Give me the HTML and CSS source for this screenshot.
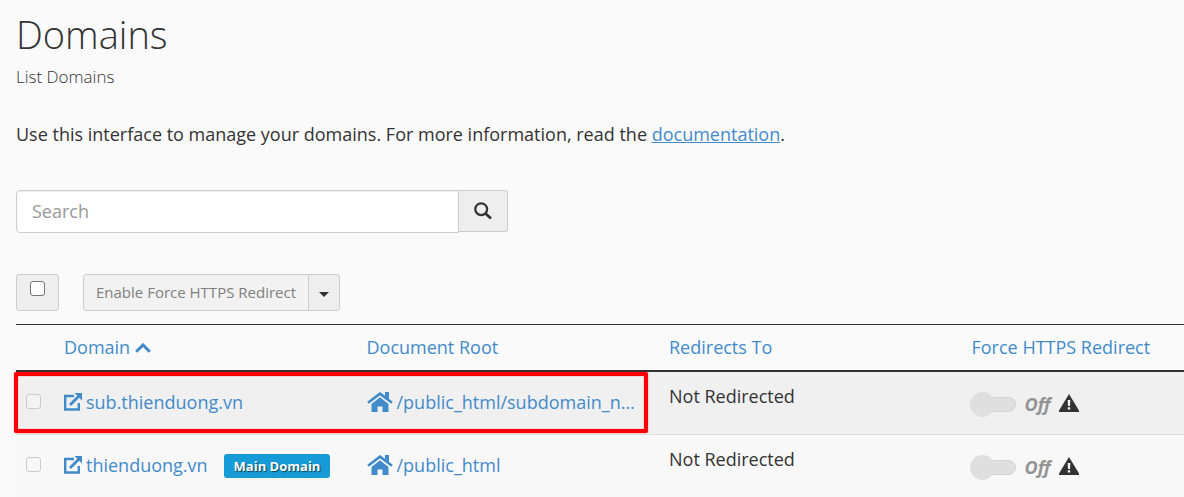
FILE: index.html
```html
<!DOCTYPE html>
<html lang="en">
<head>
<meta charset="utf-8">
<title>Domains</title>
<link rel="stylesheet" href="styles.css">
</head>
<body>
<svg class="sprite" aria-hidden="true">
  <symbol id="external" viewBox="0 0 18 18">
    <path d="M10 3H1.200V16.500H14.800V10" fill="none" stroke="currentColor" stroke-width="2.400"/>
    <path d="M6 12L15 3" stroke="currentColor" stroke-width="2.800"/>
    <path d="M10.500 0H18V7.500Z" fill="currentColor"/>
  </symbol>
  <symbol id="home" viewBox="0 0 26 20">
    <path d="M1 10.800L13 1.600L25 10.800" fill="none" stroke="currentColor" stroke-width="2.600"/>
    <path d="M18 0H22V8L18 5Z" fill="currentColor"/>
    <path d="M13 5.200L21.500 12V20H15.500V14.500H10.500V20H4.500V12Z" fill="currentColor"/>
  </symbol>
  <symbol id="warning" viewBox="0 0 20 18">
    <path d="M10 0L20 16.500V18H0V16.500Z" fill="currentColor"/>
    <path d="M8.700 6H11.300L11 12H9ZM8.800 13.200H11.200V15.500H8.800Z" fill="#f5f5f5"/>
  </symbol>
</svg>
<main class="page">
  <h1 class="title">Domains</h1>
  <h2 class="subtitle">List Domains</h2>
  <p class="intro">Use this interface to manage your domains. For more information, read the <a class="doc-link" href="#">documentation</a>.</p>

  <form class="search">
    <input class="search-input" type="text" placeholder="Search" aria-label="Search">
    <button class="search-button" type="button" aria-label="Search">
      <svg class="search-icon" viewBox="0 0 18 18"><circle cx="7.200" cy="7.200" r="5.900" fill="none" stroke="currentColor" stroke-width="2.200"/><path d="M11.500 11.500L17 16.500" stroke="currentColor" stroke-width="2.800"/></svg>
    </button>
  </form>

  <div class="toolbar">
    <label class="select-all"><input class="check" type="checkbox" aria-label="Select all domains"></label>
    <div class="button-group">
      <button class="bulk-button" type="button" disabled>Enable Force HTTPS Redirect</button>
      <button class="caret-button" type="button" aria-label="More actions"><span class="caret"></span></button>
    </div>
  </div>

  <div class="table-wrap">
    <table class="domains">
      <colgroup><col class="col-check"><col class="col-data"><col class="col-data"><col class="col-data"><col></colgroup>
      <thead>
        <tr>
          <th></th>
          <th><a class="link" href="#">Domain <svg class="sort-icon" viewBox="0 0 16 10"><path d="M1.200 8.700L8 2L14.800 8.700" fill="none" stroke="currentColor" stroke-width="3"/></svg></a></th>
          <th><a class="link" href="#">Document Root</a></th>
          <th><a class="link" href="#">Redirects To</a></th>
          <th><a class="link" href="#">Force HTTPS Redirect</a></th>
        </tr>
      </thead>
      <tbody>
        <tr class="row-hover">
          <td class="check-cell"><input class="check" type="checkbox" aria-label="sub.thienduong.vn" disabled></td>
          <td><div class="cell"><a class="link icon-link" href="#"><svg class="external-icon"><use href="#external"/></svg>sub.thienduong.vn</a></div></td>
          <td><div class="cell"><a class="link icon-link" href="#"><svg class="home-icon"><use href="#home"/></svg>/public_html/subdomain_n...</a></div></td>
          <td class="redirect">Not Redirected</td>
          <td><div class="cell toggle-cell"><button class="toggle" type="button" role="switch" aria-checked="false" aria-label="Force HTTPS Redirect" disabled></button><span class="state">Off</span><svg class="warning-icon"><use href="#warning"/></svg></div></td>
        </tr>
        <tr>
          <td class="check-cell"><input class="check" type="checkbox" aria-label="thienduong.vn" disabled></td>
          <td><div class="cell"><a class="link icon-link" href="#"><svg class="external-icon"><use href="#external"/></svg>thienduong.vn</a><span class="badge">Main Domain</span></div></td>
          <td><div class="cell"><a class="link icon-link" href="#"><svg class="home-icon"><use href="#home"/></svg>/public_html</a></div></td>
          <td class="redirect">Not Redirected</td>
          <td><div class="cell toggle-cell"><button class="toggle" type="button" role="switch" aria-checked="false" aria-label="Force HTTPS Redirect" disabled></button><span class="state">Off</span><svg class="warning-icon"><use href="#warning"/></svg></div></td>
        </tr>
      </tbody>
    </table>
    <div class="highlight"></div>
  </div>
</main>
</body>
</html>
```
FILE: styles.css
```css
* { box-sizing: border-box; }
body {
  margin: 0;
  background: #fafafa;
  color: #333;
  font: 18px/26px "Open Sans", sans-serif;
  overflow: hidden;
}
svg { flex: none; }
.sprite { display: none; }
.page { padding: 12px 0 0 16px; }
.title { margin: 0; font-size: 38px; line-height: 44px; font-weight: 300; }
.subtitle { margin: 10px 0 0; font-size: 17px; line-height: 22px; font-weight: 300; }
.intro { margin: 33px 0 0; }
.doc-link { color: #428bca; text-decoration: underline; }

.search { display: flex; align-items: flex-start; width: 492px; max-width: 100%; margin-top: 43px; }
.search-input {
  flex: 1;
  min-width: 0;
  height: 43px;
  padding: 0 15px 2px;
  border: 1px solid #ccc;
  border-radius: 4px 0 0 4px;
  background: #fff;
  box-shadow: inset 0 1px 1px rgba(0, 0, 0, .08);
  color: #333;
  font: inherit;
}
.search-input::placeholder { color: #999; opacity: 1; }
.search-button {
  width: 49px;
  height: 42px;
  padding: 0;
  border: 1px solid #ccc;
  border-left: 0;
  border-radius: 0 3px 3px 0;
  background: #eee;
  color: #333;
}
.search-icon { width: 18px; height: 18px; vertical-align: middle; }

.toolbar { display: flex; gap: 24px; margin-top: 41px; }
.select-all {
  display: flex;
  justify-content: center;
  width: 43px;
  height: 37px;
  padding-top: 6px;
  border: 1px solid #ccc;
  border-radius: 3px;
  background: #eee;
}
.check {
  appearance: none;
  width: 15px;
  height: 15px;
  margin: 0;
  border: 1px solid #767676;
  border-radius: 3px;
  background: #fff;
}
.check:disabled { border-color: #ccc; background: #f8f8f8; }
.button-group { display: flex; }
.bulk-button, .caret-button {
  height: 37px;
  border: 1px solid #ccc;
  background: #eee;
  font: 15px/22px "Open Sans", sans-serif;
}
.bulk-button { padding: 0 12px 2px; border-radius: 3px 0 0 3px; background: #f2f2f2; color: #808080; }
.caret-button {
  display: flex;
  align-items: center;
  justify-content: center;
  width: 32px;
  padding: 3px 0 0;
  margin-left: -1px;
  border-radius: 0 3px 3px 0;
}
.caret { border: 5px solid transparent; border-top-color: #333; border-bottom: 0; }

.table-wrap { position: relative; margin-top: 13px; }
.domains { width: 100%; border-collapse: separate; border-spacing: 0; table-layout: fixed; }
.col-check { width: 40px; }
.col-data { width: 25.9%; }
.domains th {
  height: 48px;
  padding: 0 8px 2px;
  border-top: 1px solid #333;
  border-bottom: 2px solid #333;
  font-weight: 400;
  text-align: left;
  white-space: nowrap;
}
.domains td {
  height: 63px;
  padding: 11px 8px 0;
  border-bottom: 1px solid #ddd;
  background: #f8f8f8;
  vertical-align: top;
  white-space: nowrap;
}
.domains .row-hover td { background: #f0f0f0; }
.row-hover .check { background: #f4f4f4; }
.domains .check-cell { padding: 22px 10px 0; line-height: 0; }
.link { color: #428bca; text-decoration: none; }
.icon-link { display: flex; align-items: center; gap: 4px; }
.cell { display: flex; align-items: center; gap: 16px; height: 38px; }
.sort-icon { width: 16px; height: 10px; vertical-align: 1px; }
.external-icon { width: 18px; height: 18px; }
.home-icon { width: 26px; height: 20px; }
.warning-icon { width: 20px; height: 18px; margin-bottom: 3px; }
.badge {
  height: 24px;
  margin-top: 2px;
  padding: 0 10px;
  border-radius: 3px;
  background: #179bd7;
  color: #fff;
  font-size: 13px;
  line-height: 24px;
  font-weight: 700;
  text-shadow: 1px 1px 1px rgba(0, 0, 0, .6);
}
.toggle-cell { gap: 9px; padding-top: 4px; }
.toggle {
  position: relative;
  width: 44px;
  height: 15px;
  padding: 0;
  border: 1px solid #d3d3d3;
  border-radius: 8px;
  background: #dfdfdf;
}
.toggle::before {
  content: "";
  position: absolute;
  top: -6px;
  left: -3px;
  width: 25px;
  height: 25px;
  border-radius: 50%;
  background: #dfdfdf;
}
.state { color: #939393; font-weight: 700; font-style: italic; }
.highlight {
  position: absolute;
  top: 48px;
  left: -2px;
  width: calc(54% + 3px);
  height: 61px;
  border: 4px solid #f00;
  border-radius: 2px;
  box-shadow: 0 0 1px #f00, inset 0 0 1px #f00;
  pointer-events: none;
}
```
